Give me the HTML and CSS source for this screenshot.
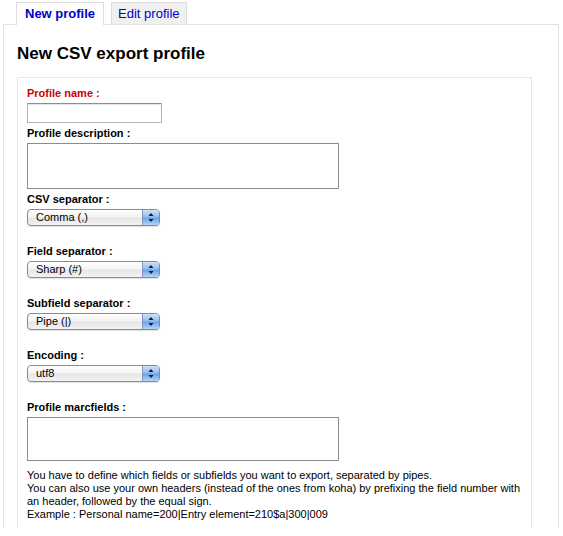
FILE: index.html
```html
<!DOCTYPE html>
<html>
<head>
<meta charset="utf-8">
<title>New CSV export profile</title>
<link rel="stylesheet" href="styles.css">
</head>
<body>
<div class="page">
  <div class="tabs">
    <a class="tab active" href="#new">New profile</a>
    <a class="tab" href="#edit">Edit profile</a>
  </div>
  <div class="panel">
    <h1>New CSV export profile</h1>
    <form class="rows">
      <div class="field">
        <label class="required">Profile name :</label>
        <input class="text" type="text">
      </div>
      <div class="field">
        <label>Profile description :</label>
        <textarea class="area"></textarea>
      </div>
      <div class="field">
        <label>CSV separator :</label>
        <div class="select">
          <select><option>Comma (,)</option></select>
          <span class="arrows"><svg width="16" height="15" viewBox="0 0 16 15"><polygon points="5.5,6 8,3 10.5,6" /><polygon points="5.5,9 8,12 10.5,9" /></svg></span>
        </div>
      </div>
      <div class="field">
        <label>Field separator :</label>
        <div class="select">
          <select><option>Sharp (#)</option></select>
          <span class="arrows"><svg width="16" height="15" viewBox="0 0 16 15"><polygon points="5.5,6 8,3 10.5,6" /><polygon points="5.5,9 8,12 10.5,9" /></svg></span>
        </div>
      </div>
      <div class="field">
        <label>Subfield separator :</label>
        <div class="select">
          <select><option>Pipe (|)</option></select>
          <span class="arrows"><svg width="16" height="15" viewBox="0 0 16 15"><polygon points="5.5,6 8,3 10.5,6" /><polygon points="5.5,9 8,12 10.5,9" /></svg></span>
        </div>
      </div>
      <div class="field">
        <label>Encoding :</label>
        <div class="select">
          <select><option>utf8</option></select>
          <span class="arrows"><svg width="16" height="15" viewBox="0 0 16 15"><polygon points="5.5,6 8,3 10.5,6" /><polygon points="5.5,9 8,12 10.5,9" /></svg></span>
        </div>
      </div>
      <div class="field">
        <label>Profile marcfields :</label>
        <textarea class="area marc"></textarea>
        <p class="help">You have to define which fields or subfields you want to export, separated by pipes.<br>
        You can also use your own headers (instead of the ones from koha) by prefixing the field number with an header, followed by the equal sign.<br>
        Example : Personal name=200|Entry element=210$a|300|009</p>
      </div>
    </form>
  </div>
</div>
</body>
</html>
```

FILE: styles.css
```css
html, body {
  margin: 0;
  padding: 0;
  background: #fff;
}

body {
  font-family: "Liberation Sans", Arial, sans-serif;
  color: #000;
}

.page {
  box-sizing: border-box;
  height: 528px;
  padding: 2px 4px 0 3px;
  display: flex;
  flex-direction: column;
  overflow: hidden;
}

.tabs {
  display: flex;
  align-items: flex-start;
  gap: 7px;
  margin: 0 0 -1px 13px;
  position: relative;
  z-index: 1;
}

.tab {
  display: block;
  font-size: 13px;
  line-height: 15px;
  text-decoration: none;
  color: #0000cc;
  background: #f0f0f0;
  border: 1px solid #dcdcdc;
  border-bottom: none;
  padding: 2.5px 6px 3.5px;
}

.tab.active {
  font-weight: bold;
  background: #fff;
  border-color: #dedede;
  padding: 2.5px 8px 4.5px;
}

.panel {
  flex: 1;
  display: flex;
  flex-direction: column;
  border: 1px solid #e2e2e2;
  border-bottom: none;
  padding: 0 26px 0 13px;
}

h1 {
  font-size: 17px;
  line-height: 20px;
  font-weight: bold;
  margin: 19px 0 13px;
}

.rows {
  flex: 1;
  margin: 0;
  border: 1px solid #e6e6e6;
  border-bottom: none;
  padding: 9px 0 0 9px;
}

.field label {
  display: block;
  font-size: 11px;
  font-weight: bold;
  line-height: 13px;
  margin: 0 0 3px;
}

.field label.required {
  color: #cc0000;
}

.text {
  display: block;
  box-sizing: border-box;
  width: 135px;
  height: 20px;
  margin: 0 0 4px;
  border: 1px solid #b4b4b4;
  border-top-color: #8e8e8e;
  box-shadow: inset 0 1px 1px rgba(0, 0, 0, 0.12);
  background: #fff;
  padding: 0 3px;
}

.area {
  display: block;
  box-sizing: border-box;
  width: 312px;
  height: 46px;
  margin: 0 0 4px;
  border: 1px solid #8c8c8c;
  resize: none;
  background: #fff;
  padding: 2px;
}

.area.marc {
  height: 44px;
  margin-bottom: 8px;
}

.select {
  display: flex;
  box-sizing: border-box;
  width: 133px;
  height: 17px;
  margin: 1px 0 19px;
  border: 1px solid #8a8a8a;
  border-radius: 4px;
  overflow: hidden;
  background: linear-gradient(#ffffff, #f4f4f4 45%, #e6e6e6 55%, #f3f3f3);
  box-shadow: 0 1px 1px rgba(0, 0, 0, 0.12);
}

.select select {
  flex: 1;
  min-width: 0;
  appearance: none;
  -webkit-appearance: none;
  border: 0;
  background: transparent;
  font-family: "Liberation Sans", Arial, sans-serif;
  font-size: 11px;
  line-height: 15px;
  height: 15px;
  padding: 0 0 0 8px;
  margin: 0;
  color: #000;
  outline: none;
}

.arrows {
  display: block;
  width: 16px;
  height: 15px;
  border-left: 1px solid #7d97c0;
  background: linear-gradient(#cfe2f8, #94bdee 45%, #6aa3ea 55%, #b3d5f8);
}

.arrows svg {
  display: block;
  fill: #1a1a1a;
}

.help {
  margin: 0;
  font-size: 11px;
  line-height: 13px;
}
```
